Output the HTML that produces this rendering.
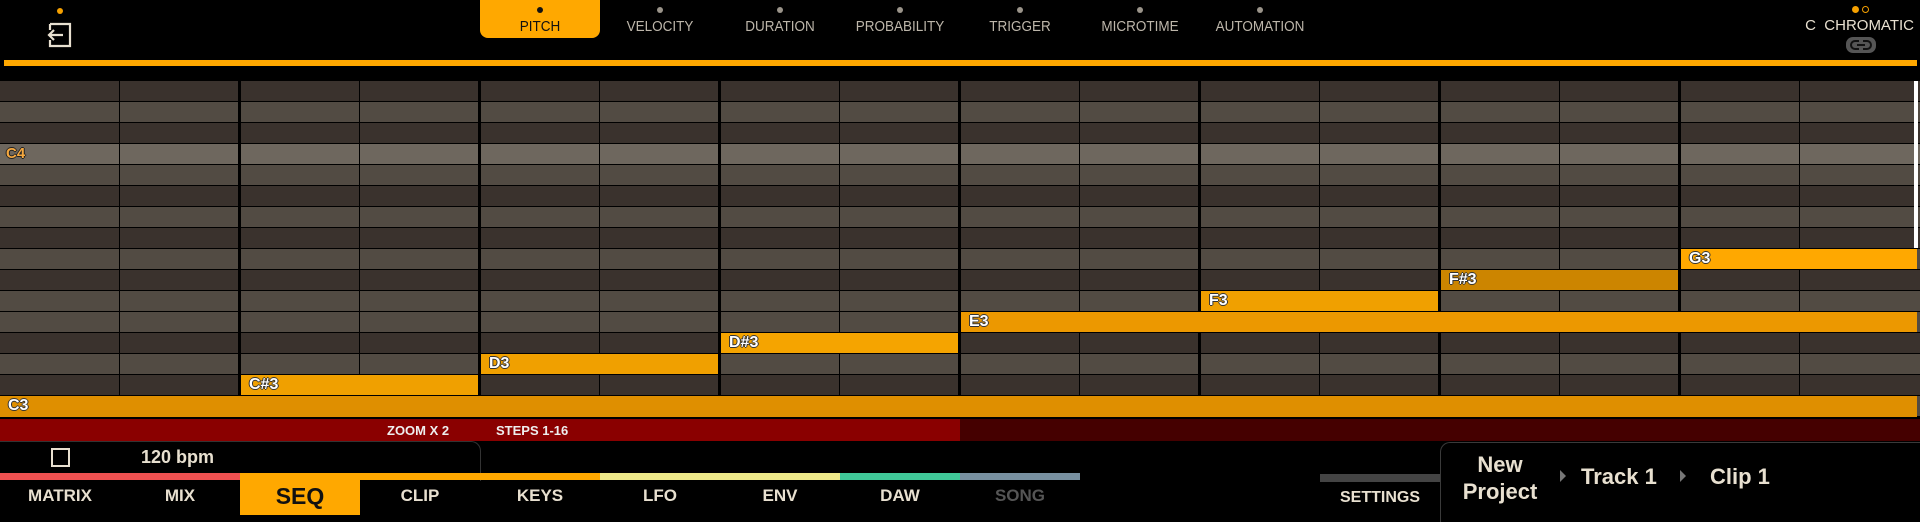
<!DOCTYPE html>
<html><head><meta charset="utf-8"><style>
*{margin:0;padding:0;box-sizing:border-box}
body{width:1920px;height:515px;background:#000;position:relative;overflow:hidden;font-family:"Liberation Sans",sans-serif}
.a{position:absolute}
.tt{position:absolute;top:0;width:120px;height:38px;text-align:center;color:#bdb6aa;font-size:15px}
.tt i{display:block;width:6px;height:6px;border-radius:50%;background:#9a948a;margin:7px auto 5px}
.tt span{display:block;transform:scaleX(.9)}
.row{position:absolute;left:0;width:1920px;height:20px}
.n{position:absolute;height:20px;color:#fff;font-weight:bold;font-size:16px;line-height:20px;padding-left:8px;text-shadow:-1px 0 #333,1px 0 #333,0 -1px #333,0 1px #333}
.bt{position:absolute;top:480px;width:120px;height:35px;text-align:center;line-height:32px;color:#e8e0d0;font-weight:bold;font-size:17px}
.st{position:absolute;top:473px;height:7px}
</style></head><body>
<div class="a" style="left:57px;top:8px;width:6px;height:6px;border-radius:50%;background:#f5a000"></div>
<svg class="a" style="left:46px;top:22px" width="26" height="26" viewBox="0 0 26 26"><path d="M4 2H24V24H4V18M4 8V2" fill="none" stroke="#e8e0d0" stroke-width="2.2"/><path d="M17 13H3M8 8L3 13L8 18" fill="none" stroke="#e8e0d0" stroke-width="2.2"/></svg>
<div class="a" style="left:480px;top:0;width:120px;height:38px;background:#ffa800;border-radius:0 0 8px 8px"></div>
<div class="tt" style="left:480px;color:#111"><i style="background:#111"></i><span>PITCH</span></div>
<div class="tt" style="left:600px"><i></i><span>VELOCITY</span></div>
<div class="tt" style="left:720px"><i></i><span>DURATION</span></div>
<div class="tt" style="left:840px"><i></i><span>PROBABILITY</span></div>
<div class="tt" style="left:960px"><i></i><span>TRIGGER</span></div>
<div class="tt" style="left:1080px"><i></i><span>MICROTIME</span></div>
<div class="tt" style="left:1200px"><i></i><span>AUTOMATION</span></div>
<div class="a" style="left:1852px;top:6px;width:7px;height:7px;border-radius:50%;background:#f5a000"></div>
<div class="a" style="left:1862px;top:6px;width:7px;height:7px;border-radius:50%;border:1.5px solid #f5a000"></div>
<div class="a" style="right:6px;top:17px;color:#e8e0d0;font-size:15px">C&nbsp;&nbsp;CHROMATIC</div>
<svg class="a" style="left:1845px;top:36px" width="32" height="18" viewBox="0 0 32 18"><rect x="1" y="1" width="30" height="16" rx="7" fill="#555"/><path d="M14 5H10a4 4 0 0 0 0 8h4M18 5h4a4 4 0 0 1 0 8h-4M12 9h8" fill="none" stroke="#111" stroke-width="2"/></svg>
<div class="a" style="left:4px;top:60px;width:1913px;height:6px;background:#ffa800"></div>
<div class="a" style="left:0;top:81px;width:1920px;height:338px;background:#000">
<div class="row" style="top:0;background:#3a322d"></div>
<div class="row" style="top:21px;background:#524b43"></div>
<div class="row" style="top:42px;background:#3a322d"></div>
<div class="row" style="top:63px;background:#6e675e"></div>
<div class="row" style="top:84px;background:#524b43"></div>
<div class="row" style="top:105px;background:#3a322d"></div>
<div class="row" style="top:126px;background:#524b43"></div>
<div class="row" style="top:147px;background:#3a322d"></div>
<div class="row" style="top:168px;background:#524b43"></div>
<div class="row" style="top:189px;background:#3a322d"></div>
<div class="row" style="top:210px;background:#524b43"></div>
<div class="row" style="top:231px;background:#524b43"></div>
<div class="row" style="top:252px;background:#3a322d"></div>
<div class="row" style="top:273px;background:#524b43"></div>
<div class="row" style="top:294px;background:#3a322d"></div>
<div class="row" style="top:315px;background:#524b43"></div>
<svg class="a" style="left:0;top:0" width="1920" height="338">
<g fill="#000">
<rect x="119" y="0" width="1" height="338"/><rect x="359" y="0" width="1" height="338"/><rect x="599" y="0" width="1" height="338"/><rect x="839" y="0" width="1" height="338"/><rect x="1079" y="0" width="1" height="338"/><rect x="1319" y="0" width="1" height="338"/><rect x="1559" y="0" width="1" height="338"/><rect x="1799" y="0" width="1" height="338"/>
<rect x="238" y="0" width="3" height="338"/><rect x="478" y="0" width="3" height="338"/><rect x="718" y="0" width="3" height="338"/><rect x="958" y="0" width="3" height="338"/><rect x="1198" y="0" width="3" height="338"/><rect x="1438" y="0" width="3" height="338"/><rect x="1678" y="0" width="3" height="338"/>
</g></svg>
<div class="n" style="left:0;top:63px;color:#f5a840;font-size:15px;padding-left:6px;text-shadow:-1px 0 #222,1px 0 #222,0 -1px #222,0 1px #222">C4</div>
<div class="n" style="left:1681px;top:168px;width:236px;background:#ffa800">G3</div>
<div class="n" style="left:1441px;top:189px;width:237px;background:#cc8500">F#3</div>
<div class="n" style="left:1201px;top:210px;width:237px;background:#f0a000">F3</div>
<div class="n" style="left:961px;top:231px;width:956px;background:#ec9800">E3</div>
<div class="n" style="left:721px;top:252px;width:237px;background:#f5a400">D#3</div>
<div class="n" style="left:481px;top:273px;width:237px;background:#f0a000">D3</div>
<div class="n" style="left:241px;top:294px;width:237px;background:#f0a000">C#3</div>
<div class="n" style="left:0;top:315px;width:1917px;height:21px;background:#df8f00">C3</div>
<div class="a" style="left:1914px;top:0;width:4px;height:167px;background:#fff"></div>
</div>
<div class="a" style="left:0;top:419px;width:960px;height:22px;background:#8a0000"></div>
<div class="a" style="left:960px;top:419px;width:960px;height:22px;background:#450000"></div>
<div class="a" style="left:387px;top:423px;color:#eee;font-size:13px;font-weight:bold">ZOOM X 2</div>
<div class="a" style="left:496px;top:423px;color:#eee;font-size:13px;font-weight:bold">STEPS 1-16</div>
<div class="a" style="left:-10px;top:441px;width:491px;height:40px;border:1.5px solid #333;border-left:none;border-bottom:none;border-radius:0 10px 0 0"></div>
<div class="a" style="left:51px;top:448px;width:19px;height:19px;border:2.5px solid #e8e0d0"></div>
<div class="a" style="left:141px;top:447px;color:#e8e0d0;font-size:18px;font-weight:bold">120 bpm</div>
<div class="st" style="left:0;width:240px;background:#ee5050"></div>
<div class="st" style="left:240px;width:360px;background:#ffa800"></div>
<div class="st" style="left:600px;width:240px;background:#eee88a"></div>
<div class="st" style="left:840px;width:120px;background:#40c898"></div>
<div class="st" style="left:960px;width:120px;background:#7890a0"></div>
<div class="a" style="left:240px;top:473px;width:120px;height:42px;background:#ffa800"></div>
<div class="bt" style="left:0">MATRIX</div>
<div class="bt" style="left:120px">MIX</div>
<div class="bt" style="left:240px;color:#111;font-size:23px">SEQ</div>
<div class="bt" style="left:360px">CLIP</div>
<div class="bt" style="left:480px">KEYS</div>
<div class="bt" style="left:600px">LFO</div>
<div class="bt" style="left:720px">ENV</div>
<div class="bt" style="left:840px">DAW</div>
<div class="bt" style="left:960px;color:#555">SONG</div>
<div class="a" style="left:1320px;top:474px;width:120px;height:8px;background:#444"></div>
<div class="bt" style="left:1320px;top:482px;font-size:16px">SETTINGS</div>
<div class="a" style="left:1440px;top:442px;width:500px;height:80px;border:1.5px solid #3a3a3a;border-right:none;border-bottom:none;border-radius:10px 0 0 0"></div>
<div class="a" style="left:1448px;top:451px;width:104px;text-align:center;color:#e8e0d0;font-size:22px;font-weight:bold;line-height:27px">New<br>Project</div>
<div class="a" style="left:1560px;top:470px;width:0;height:0;border-left:6px solid #777;border-top:6px solid transparent;border-bottom:6px solid transparent"></div>
<div class="a" style="left:1581px;top:464px;color:#e8e0d0;font-size:22px;font-weight:bold">Track 1</div>
<div class="a" style="left:1680px;top:470px;width:0;height:0;border-left:6px solid #777;border-top:6px solid transparent;border-bottom:6px solid transparent"></div>
<div class="a" style="left:1710px;top:464px;color:#e8e0d0;font-size:22px;font-weight:bold">Clip 1</div>
</body></html>
